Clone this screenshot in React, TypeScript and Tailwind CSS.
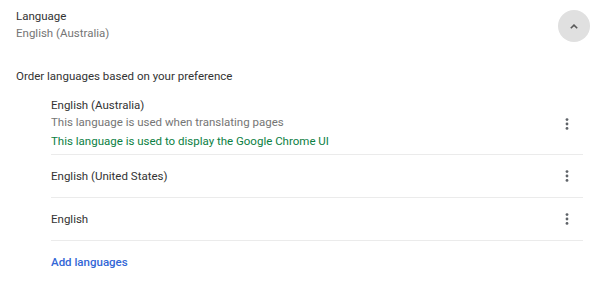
import React from 'react';

interface LanguageRow {
  name: string;
  notes?: { text: string; tone: 'muted' | 'green' }[];
}

const languages: LanguageRow[] = [
  {
    name: 'English (Australia)',
    notes: [
      { text: 'This language is used when translating pages', tone: 'muted' },
      { text: 'This language is used to display the Google Chrome UI', tone: 'green' },
    ],
  },
  { name: 'English (United States)' },
  { name: 'English' },
];

const MoreDots = () => (
  <button className="flex h-8 w-8 items-center justify-center rounded-full text-[#5f6368]">
    <svg width="4" height="12" viewBox="0 0 4 12" fill="currentColor">
      <circle cx="2" cy="1.6" r="1.4" />
      <circle cx="2" cy="6" r="1.4" />
      <circle cx="2" cy="10.4" r="1.4" />
    </svg>
  </button>
);

export default function App() {
  return (
    <div className="h-[282px] w-[600px] bg-white font-['Roboto',sans-serif] text-[11.5px] text-[#333]">
      {/* Header */}
      <div className="flex items-start justify-between pl-4 pr-[10px] pt-2">
        <div>
          <div className="leading-[17px]">Language</div>
          <div className="leading-[17px] text-[#757575]">English (Australia)</div>
        </div>
        <button className="mt-[2px] flex h-8 w-8 items-center justify-center rounded-full bg-[#e0e0e0] text-[#5a5a5a]">
          <svg width="8" height="5" viewBox="0 0 8 5" fill="none" stroke="currentColor" strokeWidth="1.6">
            <path d="M0.8 4.3L4 1.1L7.2 4.3" />
          </svg>
        </button>
      </div>

      <div className="mt-[26px] pl-4 leading-[17px]">Order languages based on your preference</div>

      {/* List */}
      <div className="ml-[51px] mr-[17px] mt-3">
        {languages.map((lang) => (
          <div
            key={lang.name}
            className={`flex items-center justify-between border-b border-[#ebebeb] ${
              lang.notes ? 'pb-[4px]' : 'h-[43px]'
            }`}
          >
            <div>
              <div className="leading-[17px]">{lang.name}</div>
              {lang.notes?.map((n, j) => (
                <div
                  key={j}
                  className={`leading-[17px] ${j === 0 ? '' : 'mt-[2px]'} ${
                    n.tone === 'green' ? 'text-[#0b8043]' : 'text-[#757575]'
                  }`}
                >
                  {n.text}
                </div>
              ))}
            </div>
            <MoreDots />
          </div>
        ))}
        <div className="pt-[13px] font-medium leading-[17px] text-[#3367d6]">Add languages</div>
      </div>
    </div>
  );
}
